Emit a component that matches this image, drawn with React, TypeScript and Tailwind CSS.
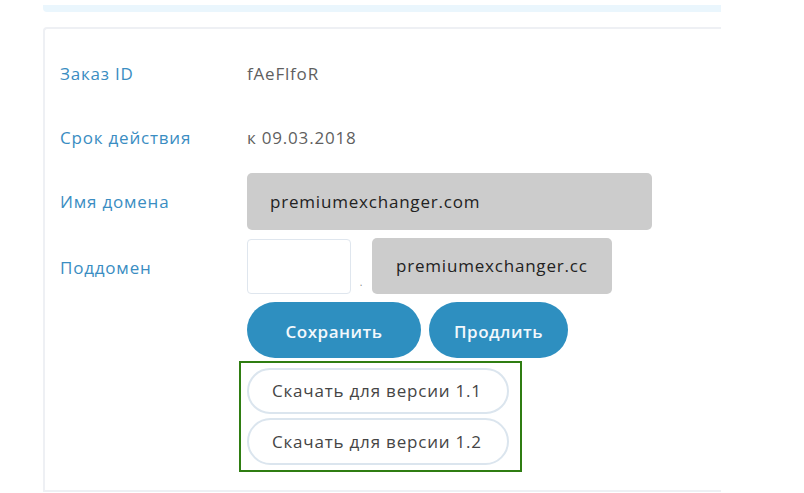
import React from "react";

export default function App() {
  const font = { fontFamily: '"Open Sans", "Noto Sans", sans-serif' };
  return (
    <div className="w-[804px] h-[493px] bg-white overflow-hidden relative text-[17px] tracking-[0.8px]" style={font}>
      <div className="ml-[43px] mt-[5px] w-[678px] h-[7px] bg-[#eaf6fd] rounded-bl-[4px]" />
      <div className="ml-[43px] mt-[15px] w-[678px] h-[465px] border-l-2 border-t-2 border-b-2 border-[#eef0f4] rounded-tl-[4px] pl-[15px] pt-[16px]">
        <div className="flex flex-col">
          <div className="flex items-center h-[57px]">
            <div className="w-[187px] text-[#3a8dc2]">Заказ ID</div>
            <div className="text-[#5f5f5f]">fAeFlfoR</div>
          </div>
          <div className="flex items-center h-[57px] mt-[7px]">
            <div className="w-[187px] text-[#3a8dc2]">Срок действия</div>
            <div className="text-[#5f5f5f]">к 09.03.2018</div>
          </div>
          <div className="flex items-center h-[57px] mt-[7px]">
            <div className="w-[187px] text-[#3a8dc2]">Имя домена</div>
            <div className="w-[405px] h-[57px] bg-[#cccccc] rounded-[5px] flex items-center pl-[23px] text-[#222222]">
              premiumexchanger.com
            </div>
          </div>
          <div className="flex items-center h-[56px] mt-[8px]">
            <div className="w-[187px] text-[#3a8dc2] mt-[4px]">Поддомен</div>
            <div className="w-[104px] h-[55px] bg-white border border-[#dfe6ee] rounded-[4px]" />
            <div className="w-[21px] self-end pb-[4px] text-center text-[10px] text-[#888]">.</div>
            <div className="w-[240px] h-[56px] bg-[#cccccc] rounded-[5px] flex items-center pl-[24px] text-[#222222]">
              premiumexchanger.cc
            </div>
          </div>
          <div className="flex ml-[187px] mt-[8px] gap-[8px]">
            <button className="w-[174px] h-[56px] rounded-full bg-[#2e8fc0] text-[#f2f8fc] font-semibold pt-[3px] tracking-[0.5px]">Сохранить</button>
            <button className="w-[139px] h-[56px] rounded-full bg-[#2e8fc0] text-[#f2f8fc] font-semibold pt-[3px] tracking-[0.5px]">Продлить</button>
          </div>
          <div className="ml-[179px] mt-[3px] w-[283px] h-[111px] border-2 border-[#2f7d12] pl-[6px] pt-[5px] flex flex-col gap-[4px]">
            <button className="w-[262px] h-[46px] rounded-full bg-white border-2 border-[#dbe5ee] text-[#454545] text-left pl-[23px]">Скачать для версии 1.1</button>
            <button className="w-[262px] h-[47px] rounded-full bg-white border-2 border-[#dbe5ee] text-[#454545] text-left pl-[23px]">Скачать для версии 1.2</button>
          </div>
        </div>
      </div>
    </div>
  );
}
